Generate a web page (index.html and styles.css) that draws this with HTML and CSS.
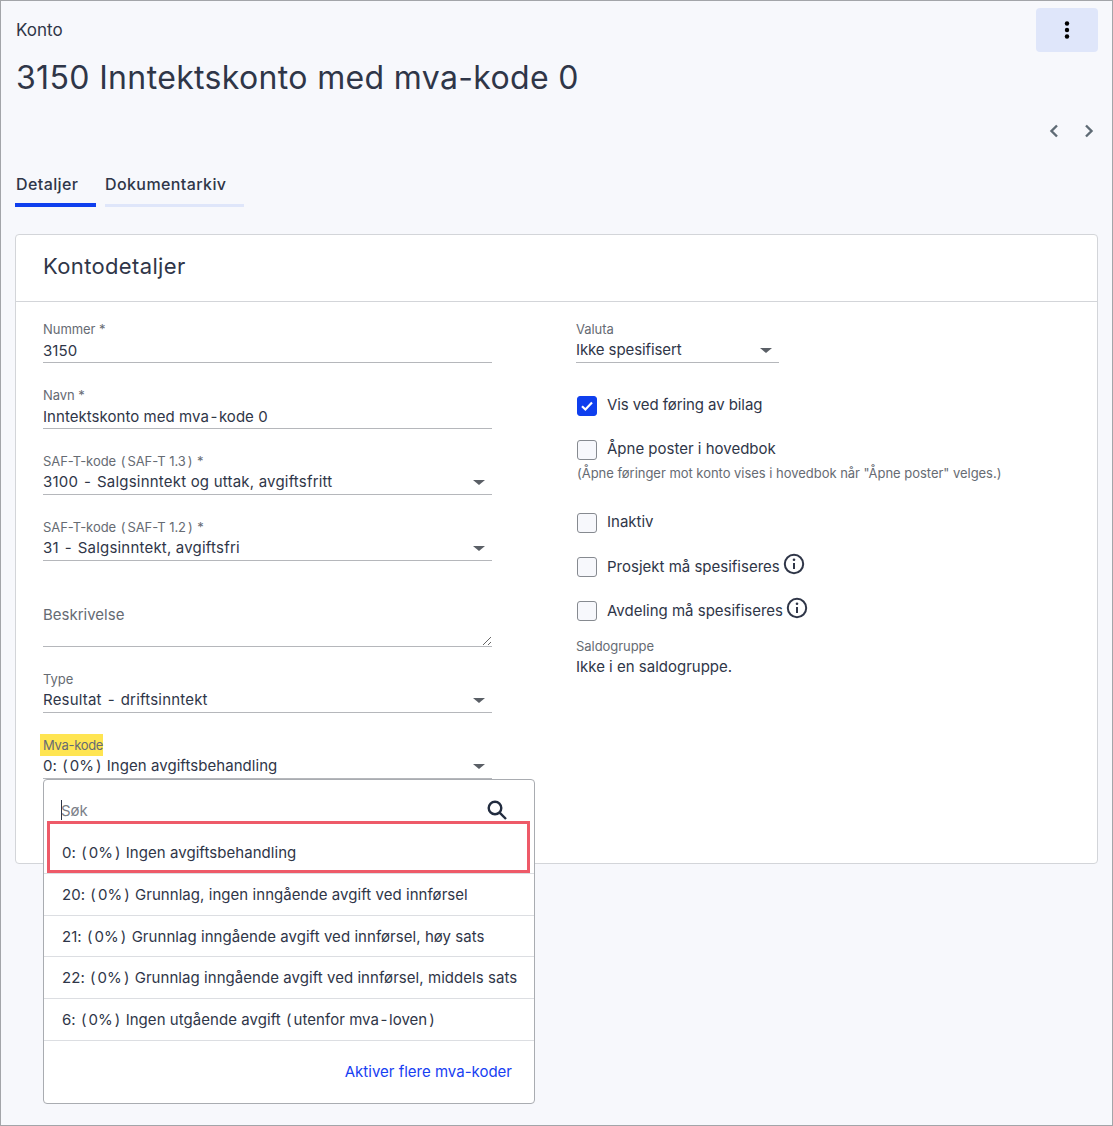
FILE: index.html
```html
<!DOCTYPE html>
<html lang="no">
<head>
<meta charset="utf-8">
<title>Konto</title>
<link rel="stylesheet" href="styles.css">
</head>
<body>
<div class="page">
  <header class="top">
    <div class="top-text">
      <div class="crumb">Konto</div>
      <h1 class="title">3150 Inntektskonto med mva-kode 0</h1>
    </div>
    <button class="more" aria-label="Mer">
      <svg width="6" height="18" viewBox="0 0 6 18"><circle cx="3" cy="2.5" r="2.2"/><circle cx="3" cy="9" r="2.2"/><circle cx="3" cy="15.5" r="2.2"/></svg>
    </button>
  </header>
  <div class="pager">
    <svg width="10" height="14" viewBox="0 0 10 14"><path d="M8 1.5 2.5 7 8 12.5"/></svg>
    <svg width="10" height="14" viewBox="0 0 10 14"><path d="M2 1.5 7.5 7 2 12.5"/></svg>
  </div>
  <nav class="tabs">
    <div class="tab tab-active">Detaljer</div>
    <div class="tab">Dokumentarkiv</div>
  </nav>
  <section class="card">
    <h2 class="card-head">Kontodetaljer</h2>
    <div class="card-body">
      <div class="col-left">
        <div class="field"><div class="label">Nummer *</div><div class="value value-text">3150</div></div>
        <div class="field"><div class="label">Navn *</div><div class="value value-text">Inntektskonto med mva<span class="dash">-</span>kode 0</div></div>
        <div class="field"><div class="label">SAF-T-kode <span class="po">(</span>SAF-T 1.3<span class="pc">)</span> *</div><div class="value select wide">3100 <span class="dash">-</span> Salgsinntekt og uttak, avgiftsfritt</div></div>
        <div class="field"><div class="label">SAF-T-kode <span class="po">(</span>SAF-T 1.2<span class="pc">)</span> *</div><div class="value select wide">31 <span class="dash">-</span> Salgsinntekt, avgiftsfri</div></div>
        <div class="field field-area"><div class="placeholder">Beskrivelse</div>
          <svg class="grip" width="10" height="10" viewBox="0 0 10 10"><path d="M1 9 9 1M6 9 9 6"/></svg>
        </div>
        <div class="field"><div class="label">Type</div><div class="value select wide">Resultat <span class="dash">-</span> driftsinntekt</div></div>
        <div class="field field-mva">
          <div class="label"><span class="mark">Mva-kode</span></div>
          <div class="value select">0: <span class="po">(</span>0%<span class="pc">)</span> Ingen avgiftsbehandling</div>
          <div class="dropdown">
            <div class="search">
              <span class="search-text">Søk</span>
              <svg width="22" height="22" viewBox="0 0 22 22"><circle cx="9" cy="9" r="6.3"/><path d="M13.6 13.6 20 20"/></svg>
            </div>
            <div class="option option-first">0: <span class="po">(</span>0%<span class="pc">)</span> Ingen avgiftsbehandling</div>
            <div class="option">20: <span class="po">(</span>0%<span class="pc">)</span> Grunnlag, ingen inngående avgift ved innførsel</div>
            <div class="option">21: <span class="po">(</span>0%<span class="pc">)</span> Grunnlag inngående avgift ved innførsel, høy sats</div>
            <div class="option">22: <span class="po">(</span>0%<span class="pc">)</span> Grunnlag inngående avgift ved innførsel, middels sats</div>
            <div class="option">6: <span class="po">(</span>0%<span class="pc">)</span> Ingen utgående avgift <span class="po">(</span>utenfor mva<span class="dash">-</span>loven<span class="pc">)</span></div>
            <div class="drop-foot"><a class="link">Aktiver flere mva-koder</a></div>
            <div class="annot"></div>
          </div>
        </div>
      </div>
      <div class="col-right">
        <div class="field field-short"><div class="label">Valuta</div><div class="value select">Ikke spesifisert</div></div>
        <div class="check check-1"><span class="box box-on"><svg width="14" height="12" viewBox="0 0 14 12"><path d="M2 6.2 5.4 9.5 12 2.5"/></svg></span><span class="check-text">Vis ved føring av bilag</span></div>
        <div class="check check-2"><span class="box"></span><span class="check-text">Åpne poster i hovedbok</span></div>
        <div class="helper">(Åpne føringer mot konto vises i hovedbok når "Åpne poster" velges.)</div>
        <div class="check check-3"><span class="box"></span><span class="check-text">Inaktiv</span></div>
        <div class="check check-4"><span class="box"></span><span>Prosjekt må spesifiseres</span>
          <svg class="info" width="22" height="22" viewBox="0 0 22 22"><circle cx="11" cy="11" r="9.2"/><path d="M11 10v6"/><circle class="dot" cx="11" cy="6.8" r="1.3"/></svg></div>
        <div class="check check-5"><span class="box"></span><span>Avdeling må spesifiseres</span>
          <svg class="info" width="22" height="22" viewBox="0 0 22 22"><circle cx="11" cy="11" r="9.2"/><path d="M11 10v6"/><circle class="dot" cx="11" cy="6.8" r="1.3"/></svg></div>
        <div class="label saldo-label">Saldogruppe</div>
        <div class="saldo-value">Ikke i en saldogruppe.</div>
      </div>
    </div>
  </section>
</div>
</body>
</html>
```
FILE: styles.css
```css
* { box-sizing: border-box; }
html, body { margin: 0; padding: 0; }
body {
  font-family: Inter, "Noto Sans", sans-serif;
  color: #2f3648;
}
.page {
  width: 1113px;
  height: 1126px;
  overflow: hidden;
  background: #f7f8fc;
  border: 1px solid #a3a5a9;
  padding: 0 14px;
}
.top { display: flex; justify-content: space-between; align-items: flex-start; padding-top: 7px; }
.top-text { padding-left: 1px; }
.crumb { font-size: 17px; line-height: 20px; margin-top: 12px; }
.title { margin: 20px 0 0; font-size: 32px; line-height: 36px; font-weight: 400; letter-spacing: 0.35px; }
.more {
  width: 62px; height: 44px; border: 0; border-radius: 4px; background: #dfe6fa;
  display: flex; align-items: center; justify-content: center; padding: 0;
}
.pager { display: flex; justify-content: flex-end; gap: 25px; margin-top: 28px; height: 14px; padding-right: 4px; }
.pager svg { fill: none; stroke: #5f6b75; stroke-width: 2.4; }
.tabs { display: flex; gap: 9px; margin-top: 36px; }
.tab {
  font-size: 16px; line-height: 20px; font-weight: 500; letter-spacing: 0.4px; padding: 0;
  height: 33px; border-bottom: 3px solid #dfe6fa; width: 139px;
}
.tab-active { border-bottom: 4px solid #0f3fee; width: 81px; padding-left: 1px; }
.card {
  margin-top: 27px; height: 630px; background: #fff;
  border: 1px solid #d3d5d9; border-radius: 4px;
}
.card-head {
  margin: 0; height: 67px; border-bottom: 1px solid #d3d5d9;
  font-size: 22px; line-height: 63px; font-weight: 400; letter-spacing: 0.35px; padding-left: 27px;
}
.card-body { display: flex; padding: 20px 0 0 27px; }
.col-left { width: 449px; display: flex; flex-direction: column; gap: 25px; }
.col-right { margin-left: 84px; flex: 1; display: flex; flex-direction: column; }
.field { position: relative; height: 41px; border-bottom: 1px solid #b5b7bb; }
.label { font-size: 13px; line-height: 15px; color: #666b73; letter-spacing: -0.05px; }
.value { font-size: 15px; line-height: 25px; position: relative; letter-spacing: 0.05px; }
.value-text { padding-top: 1px; }
.wide { letter-spacing: 0.2px; }
.dash { margin: 0 1.5px; }
.po { margin: 0 2px 0 1px; }
.pc { margin: 0 1px 0 2px; }
.select::after {
  content: ""; position: absolute; right: 7px; top: 11px;
  border-left: 6px solid transparent; border-right: 6px solid transparent; border-top: 5px solid #5a5f66;
}
.field-area { height: 61px; }
.placeholder { font-size: 15px; line-height: 20px; color: #666b73; padding-top: 19px; }
.grip { position: absolute; right: 0; bottom: 0; fill: none; stroke: #666; stroke-width: 1; }
.mark { background: #ffe552; padding: 3px 0 3px 3px; margin-left: -3px; letter-spacing: -0.3px; }
.dropdown {
  position: absolute; left: 0; top: 41px; width: 492px; height: 325px; background: #fff;
  border: 1px solid #a9acb1; border-radius: 4px; z-index: 2;
}
.search {
  margin: 0 17px; height: 43px; position: relative; display: flex; justify-content: space-between;
  align-items: flex-end; border-bottom: 1px solid #b5b7bb; padding-bottom: 1px;
}
.search::before { content: ""; position: absolute; left: 112px; width: 225px; bottom: -1px; height: 1px; background: #1337c4; }
.search::after { content: ""; position: absolute; left: 0; bottom: 2px; width: 1px; height: 20px; background: #2f3648; }
.search-text { font-size: 15px; line-height: 20px; color: #7b8088; }
.search svg { fill: none; stroke: #222c3f; stroke-width: 2.4; margin-right: 9px; margin-bottom: 0; }
.option {
  height: 41.7px; font-size: 15px; line-height: 41px; padding-left: 18px; letter-spacing: 0.05px;
  border-bottom: 1px solid #dcdee2; white-space: nowrap;
}
.option-first { height: 51px; line-height: 59px; }
.drop-foot { text-align: right; padding: 21px 22px 0 0; font-size: 15px; line-height: 20px; }
.link { color: #1740f2; }
.annot { position: absolute; left: 3px; top: 41px; width: 483px; height: 52px; border: 3px solid #ee5a68; }
.field-short { width: 203px; }
.field-short .value { letter-spacing: -0.1px; }
.check { display: flex; align-items: center; font-size: 15px; line-height: 20px; }
.check-text { padding-bottom: 2px; }
.box {
  width: 20px; height: 20px; margin: 0 10px 0 1px; flex: none; border: 1px solid #868a90; border-radius: 3px; background: #f7f8fc;
}
.box-on { background: #0f3fee; border-color: #0f3fee; display: flex; align-items: center; justify-content: center; }
.box-on svg { fill: none; stroke: #fff; stroke-width: 2.2; }
.check-1 { margin-top: 32px; letter-spacing: -0.08px; }
.check-2 { margin-top: 22px; }
.helper { font-size: 13px; line-height: 18px; color: #666b73; margin: 3px 0 0 1px; white-space: nowrap; letter-spacing: -0.03px; }
.check-3 { margin-top: 30px; }
.check-4 { margin-top: 23px; }
.check-5 { margin-top: 24px; }
.info { fill: none; stroke: #2f3648; stroke-width: 2; margin: -7px 0 0 3px; }
.info .dot { fill: #2f3648; stroke: none; }
.saldo-label { margin-top: 18px; }
.saldo-value { font-size: 15px; line-height: 20px; margin-top: 3px; }
```
